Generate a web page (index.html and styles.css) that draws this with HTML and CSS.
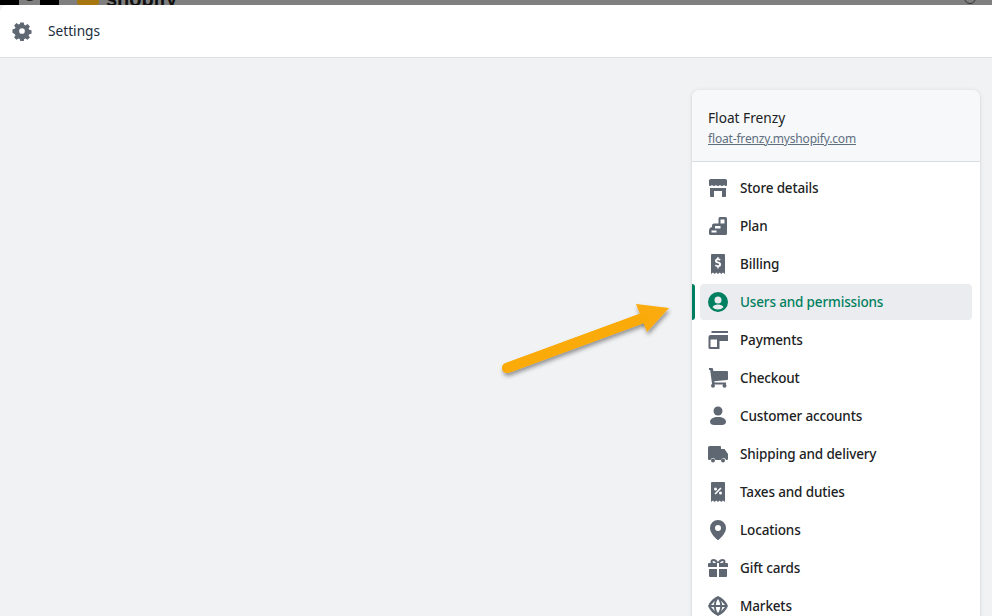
FILE: index.html
```html
<!DOCTYPE html>
<html lang="en">
<head>
<meta charset="utf-8">
<title>Settings</title>
<link rel="stylesheet" href="styles.css">
</head>
<body>
<div class="topstrip">
  <span class="strip-black"></span>
  <span class="strip-logo">C</span>
  <span class="strip-black"></span>
  <span class="strip-gold"></span>
  <span class="strip-brand">shopify</span>
  <span class="strip-search"></span>
</div>
<header class="bar">
  <svg class="bar-icon" viewBox="0 0 20 20"><path d="M8.200 1h3.600l.5 2.500 1.300.6 2.200-1.400 2.500 2.500-1.400 2.200.6 1.300 2.500.5v3.600l-2.500.5-.6 1.300 1.400 2.200-2.500 2.500-2.200-1.400-1.300.6-.5 2.500H8.200l-.5-2.500-1.300-.6-2.200 1.400-2.500-2.500 1.400-2.200-.6-1.300L0 11.800V8.200l2.500-.5.6-1.300L1.700 4.200 4.200 1.700l2.200 1.400 1.300-.6zM10 7a3 3 0 1 0 0 6 3 3 0 0 0 0-6z" fill-rule="evenodd" transform="translate(.500 .500) scale(.95)"/></svg>
  <span class="bar-title">Settings</span>
</header>
<main class="content">
  <svg class="arrow" viewBox="0 0 180 90">
    <defs><filter id="sh" x="-10%" y="-20%" width="120%" height="150%"><feDropShadow dx="1" dy="3" stdDeviation="2" flood-color="#000" flood-opacity=".4"/></filter></defs>
    <path d="M9 74 L145 24" stroke="#fbab09" stroke-width="10" stroke-linecap="round" filter="url(#sh)"/>
    <path d="M138 10 L171 14 L149 38 Z" fill="#fbab09" filter="url(#sh)"/>
    <path d="M9 74 L145 24" stroke="#fbab09" stroke-width="10" stroke-linecap="round"/>
  </svg>
  <nav class="card">
    <div class="store">
      <div class="store-name">Float Frenzy</div>
      <a class="store-url" href="#">float-frenzy.myshopify.com</a>
    </div>
    <ul class="menu">
      <li class="item"><svg class="ic" viewBox="0 0 20 20"><path fill-rule="evenodd" d="M2.500 1h15l1.500 1v5.500a2 2 0 0 1-1 .4c-.8 0-1.300-.4-2-.9-.6.500-1.200.9-2 .9s-1.400-.4-2-.9c-.6.500-1.200.9-2 .9s-1.400-.4-2-.9c-.6.500-1.200.9-2 .9s-1.300-.4-2-.9c-.6.500-1.200.9-2 .9a2 2 0 0 1-1-.4V2zM2 10h16v8a1 1 0 0 1-1 1h-3v-6H6v6H3a1 1 0 0 1-1-1z"/></svg><span>Store details</span></li>
      <li class="item"><svg class="ic" viewBox="0 0 20 20"><path fill-rule="evenodd" d="M12 1h5.500A1.500 1.500 0 0 1 19 2.500v15a1.500 1.500 0 0 1-1.500 1.500h-15A1.500 1.500 0 0 1 1 17.500v-2.500a4 4 0 0 1 3-3.900V9.500A2 2 0 0 1 6 7.500h4.500V2.500A1.500 1.500 0 0 1 12 1zM12.500 3.500v4h4v-4zM7 10v2.500h5.500V10zM3.500 14.500v2h5v-2z"/></svg><span>Plan</span></li>
      <li class="item"><svg class="ic" viewBox="0 0 20 20"><path fill-rule="evenodd" d="M4 0h12a1 1 0 0 1 1 1v19l-2-1.500-1.700 1.500-1.600-1.500-1.700 1.500-1.700-1.500-1.600 1.500L5 18.500 3 20V1a1 1 0 0 1 1-1zM9.300 3v1.200C7.900 4.500 7 5.500 7 6.700c0 1.500 1.100 2.200 2.600 2.600 1.100.3 1.500.6 1.500 1.100s-.5.900-1.200.9c-.8 0-1.400-.3-2-.9L6.800 11.700c.6.700 1.500 1.200 2.500 1.300V14.500h1.400V13c1.500-.3 2.400-1.300 2.400-2.600 0-1.500-1.100-2.200-2.700-2.600-1-.3-1.400-.5-1.400-1s.4-.8 1-.8 1.200.2 1.700.7l1-1.200c-.6-.6-1.300-1-2.100-1.200V3z"/></svg><span>Billing</span></li>
      <li class="item active"><svg class="ic" viewBox="0 0 20 20"><path fill-rule="evenodd" d="M10 0a10 10 0 1 1 0 20 10 10 0 0 1 0-20zM10 4.500a3.500 3.500 0 1 0 0 7 3.500 3.500 0 0 0 0-7zM10 12.500c-2.600 0-4.600 1-5.500 2.700A7.500 7.500 0 0 0 10 17.500a7.500 7.500 0 0 0 5.500-2.300c-.9-1.700-2.900-2.700-5.500-2.700z"/></svg><span>Users and permissions</span></li>
      <li class="item"><svg class="ic" viewBox="0 0 20 20"><path fill-rule="evenodd" d="M3.500 1H20v2H3.500zM2.500 5H20.500V11H11.500V19H2A1.500 1.500 0 0 1 .5 17.500V7a2 2 0 0 1 2-2zM3 9.500a.5.5 0 0 0-.5.5v7H9V9.500z"/></svg><span>Payments</span></li>
      <li class="item"><svg class="ic" viewBox="0 0 20 20"><path d="M1 0h3a1 1 0 0 1 1 .8L5.300 3H19a1 1 0 0 1 1 1v7a1 1 0 0 1-.9 1L6.300 13.200l.2 1.300H18v2H5a1 1 0 0 1-1-.8L2.200 2H1z"/><circle cx="5" cy="17.800" r="2"/><circle cx="16.500" cy="17.800" r="2"/></svg><span>Checkout</span></li>
      <li class="item"><svg class="ic" viewBox="0 0 20 20"><circle cx="10" cy="5" r="4.500"/><path d="M10 11c-4.500 0-8 2-8 4.800C2 18 4 19 6 19h8c2 0 4-1 4-3.200 0-2.800-3.500-4.800-8-4.800z"/></svg><span>Customer accounts</span></li>
      <li class="item"><svg class="ic" viewBox="0 0 20 20"><path fill-rule="evenodd" d="M1.500 2H12a1 1 0 0 1 1 1v2h3.500l3.500 5v5a1 1 0 0 1-1 1h-1a2.600 2.600 0 0 0-5 0H7.500a2.600 2.600 0 0 0-5 0H1a1 1 0 0 1-1-1V3.500A1.500 1.500 0 0 1 1.500 2z"/><circle cx="5" cy="16.500" r="2"/><circle cx="15" cy="16.500" r="2"/></svg><span>Shipping and delivery</span></li>
      <li class="item"><svg class="ic" viewBox="0 0 20 20"><path fill-rule="evenodd" d="M4 0h12a1 1 0 0 1 1 1v19l-2-1.500-1.700 1.500-1.600-1.500-1.700 1.500-1.700-1.500-1.600 1.500L5 18.500 3 20V1a1 1 0 0 1 1-1zM12.300 5.500 6.500 11.500l1.200 1.100 5.800-6zM7.500 5.500a1.500 1.500 0 1 0 0 3 1.500 1.500 0 0 0 0-3zM12.500 9.500a1.500 1.500 0 1 0 0 3 1.500 1.500 0 0 0 0-3z"/></svg><span>Taxes and duties</span></li>
      <li class="item"><svg class="ic" viewBox="0 0 20 20"><path fill-rule="evenodd" d="M10 0a8 8 0 0 1 8 8c0 4.500-4.500 9.500-7.300 11.700a1.100 1.100 0 0 1-1.400 0C6.500 17.500 2 12.500 2 8a8 8 0 0 1 8-8zM10 5a3 3 0 1 0 0 6 3 3 0 0 0 0-6z"/></svg><span>Locations</span></li>
      <li class="item"><svg class="ic" viewBox="0 0 20 20"><path fill-rule="evenodd" d="M5.500 1c1.800 0 3.500 1.300 4.500 3 1-1.700 2.700-3 4.500-3C16.400 1 17.500 2.300 17.500 3.700c0 .5-.1 1-.4 1.300H19a1 1 0 0 1 1 1V9H11V5H9v4H0V6a1 1 0 0 1 1-1h1.900c-.3-.3-.4-.8-.4-1.300C2.500 2.300 3.600 1 5.500 1zM5.500 3C4.900 3 4.500 3.300 4.500 3.800s.5 1.200 1.500 1.200H8C7.500 4 6.500 3 5.500 3zM14.500 3c-1 0-2 1-2.500 2h2c1 0 1.500-.7 1.500-1.200S15.100 3 14.500 3zM1 11h8v8H2a1 1 0 0 1-1-1zM11 11h8v7a1 1 0 0 1-1 1h-7z"/></svg><span>Gift cards</span></li>
      <li class="item"><svg class="ic" viewBox="0 0 20 20"><path fill-rule="evenodd" d="M10 0Q17 3 20 10 17 17 10 20 3 17 0 10 3 3 10 0zM10 3C8.800 4.700 8 6.700 7.800 9h4.400c-.2-2.300-1-4.300-2.200-6zM5.800 9c.2-1.600.6-3 1.200-4.200L3 9zM13 4.800c.6 1.200 1 2.600 1.200 4.200H17zM3 11l4 4.200c-.6-1.200-1-2.600-1.200-4.200zM7.800 11c.2 2.300 1 4.300 2.200 6 1.200-1.700 2-3.700 2.200-6zM14.200 11c-.2 1.600-.6 3-1.200 4.200l4-4.200z"/></svg><span>Markets</span></li>
    </ul>
  </nav>
</main>
</body>
</html>
```
FILE: styles.css
```css
* { box-sizing: border-box; }
html, body { margin: 0; height: 616px; overflow: hidden; }
body {
  display: flex;
  flex-direction: column;
  background: #f1f2f4;
  font-family: "Noto Sans", "Open Sans", sans-serif;
  font-size: 14px;
  color: #202223;
}
.topstrip {
  height: 5px;
  flex: none;
  background: #7f7f7f;
  display: flex;
  overflow: hidden;
  position: relative;
}
.strip-black { width: 19px; background: #000; }
.strip-logo {
  width: 21px;
  text-align: center;
  font: 700 16px/16px "Liberation Sans", sans-serif;
  margin-top: -12px;
  color: #222;
}
.strip-gold { width: 22px; margin-left: 18px; background: #a8760f; border-radius: 0 0 3px 3px; }
.strip-brand {
  margin-left: 7px;
  margin-top: -11px;
  font: 700 20px/20px "Liberation Sans", sans-serif;
  color: #111;
}
.strip-search {
  position: absolute;
  right: 16px;
  top: -8px;
  width: 12px;
  height: 12px;
  border: 1px solid #333;
  border-radius: 50%;
}
.bar {
  flex: none;
  height: 53px;
  background: #fff;
  border-bottom: 1px solid #dfe1e5;
  border-top-left-radius: 8px;
  display: flex;
  align-items: center;
  padding-left: 12px;
  gap: 16px;
}
.bar-icon { width: 20px; height: 20px; fill: #5f6773; flex: none; }
.bar-title { color: #202e3c; font-size: 13.700px; padding-bottom: 2px; }
.content {
  flex: 1;
  display: flex;
  justify-content: flex-end;
  padding: 32px 12px 0 0;
  position: relative;
  min-height: 0;
}
.arrow {
  position: absolute;
  left: 498px;
  top: 236px;
  width: 180px;
  height: 90px;
  overflow: visible;
}
.card {
  width: 288px;
  height: 600px;
  flex: none;
  background: #fff;
  border-radius: 8px 8px 0 0;
  box-shadow: 0 0 5px rgba(23, 24, 24, .08), 0 1px 2px rgba(0, 0, 0, .12);
}
.store {
  height: 72px;
  padding: 18px 16px 0;
  background: #f6f8fa;
  border-bottom: 1px solid #d9dde2;
  border-radius: 8px 8px 0 0;
}
.store-name { line-height: 20px; font-size: 13.700px; }
.store-url {
  display: block;
  margin-top: 2px;
  font-size: 12px;
  letter-spacing: -.17px;
  line-height: 18px;
  color: #5f6f80;
}
.menu { list-style: none; margin: 0; padding: 8px 8px 0; }
.item {
  height: 36px;
  margin-bottom: 2px;
  display: flex;
  align-items: center;
  gap: 12px;
  padding-left: 8px;
  border-radius: 4px;
  font-weight: 500;
  font-size: 13.500px;
  letter-spacing: -.15px;
  position: relative;
  color: #202223;
}
.ic { width: 20px; height: 20px; flex: none; fill: #5f6773; }
.active { background: #ebecef; color: #008060; }
.active .ic { fill: #008060; }
.active::before {
  content: "";
  position: absolute;
  left: -8px;
  top: 0;
  bottom: 0;
  width: 3px;
  background: #008060;
  border-radius: 0 3px 3px 0;
}
```
